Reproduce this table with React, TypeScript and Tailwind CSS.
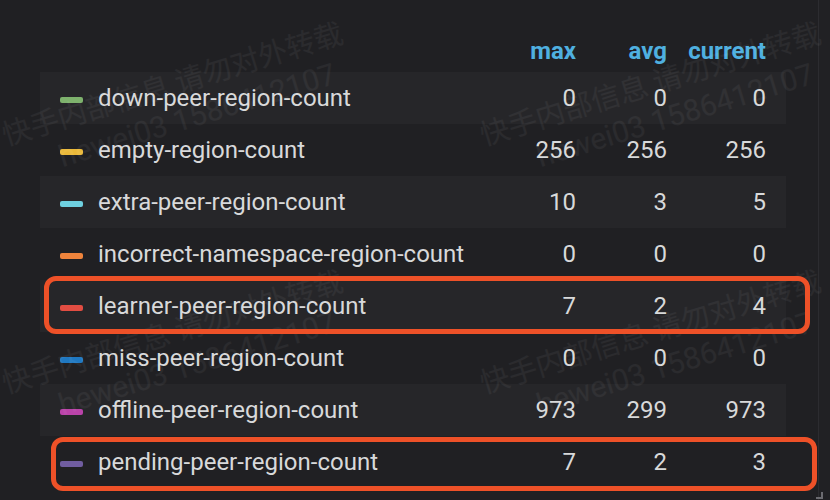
import React from 'react';

const rows = [
  { name: 'down-peer-region-count', color: '#7eb26d', max: '0', avg: '0', current: '0' },
  { name: 'empty-region-count', color: '#eab839', max: '256', avg: '256', current: '256' },
  { name: 'extra-peer-region-count', color: '#6ed0e0', max: '10', avg: '3', current: '5' },
  { name: 'incorrect-namespace-region-count', color: '#ef843c', max: '0', avg: '0', current: '0' },
  { name: 'learner-peer-region-count', color: '#e24d42', max: '7', avg: '2', current: '4' },
  { name: 'miss-peer-region-count', color: '#1f78c1', max: '0', avg: '0', current: '0' },
  { name: 'offline-peer-region-count', color: '#ba43a9', max: '973', avg: '299', current: '973' },
  { name: 'pending-peer-region-count', color: '#705da0', max: '7', avg: '2', current: '3' },
];

function Watermark({ left, top }: { left: number; top: number }) {
  return (
    <div
      className="absolute pointer-events-none origin-top-left -rotate-[17deg] whitespace-nowrap text-white/[0.05] leading-none"
      style={{ left, top }}
    >
      <div className="text-[29px] font-['Noto_Sans_CJK_SC',sans-serif]">快手内部信息 请勿对外转载</div>
      <div className="text-[30px] pl-[48px] mt-[10px]">hewei03 1586412107</div>
    </div>
  );
}

export default function App() {
  return (
    <div className="relative w-[830px] h-[500px] overflow-hidden bg-[#212124] font-['Roboto','Noto_Sans_CJK_SC',sans-serif]">
      <div className="w-[819px] h-full border-r border-[#2c2c30] bg-[#202023] pt-[30px] pl-[40px]">
        {/* Legend table */}
        <div className="w-[746px]">
          <div className="flex items-center h-[42px] pr-[20px] text-[24px] font-bold text-[#4fb0e0]">
            <div className="flex-1" />
            <div className="w-[80px] text-right">max</div>
            <div className="w-[91px] text-right">avg</div>
            <div className="w-[99px] text-right">current</div>
          </div>
          {rows.map((r, i) => (
            <div
              key={r.name}
              className={`flex items-center h-[52px] pr-[20px] text-[24px] text-[#d8d9da] ${i % 2 === 0 ? 'bg-[#262629]' : ''}`}
            >
              <div className="flex-1 flex items-center pl-[20px]">
                <span className="w-[23px] h-[6px] rounded-[2px] mt-[3px]" style={{ backgroundColor: r.color }} />
                <span className="ml-[15px]">{r.name}</span>
              </div>
              <div className="w-[80px] text-right">{r.max}</div>
              <div className="w-[91px] text-right">{r.avg}</div>
              <div className="w-[99px] text-right">{r.current}</div>
            </div>
          ))}
        </div>
      </div>

      {/* resize handle */}
      <svg className="absolute left-[815px] top-[491px]" width="9" height="9" viewBox="0 0 9 9">
        <path d="M7 1 V7 H1" fill="none" stroke="#6b6b70" strokeWidth="2" />
      </svg>

      {/* watermark */}
      <Watermark left={-2} top={120} />
      <Watermark left={476} top={120} />
      <Watermark left={-2} top={368} />
      <Watermark left={476} top={368} />

      {/* highlight boxes */}
      <div className="absolute left-[44px] top-[276px] w-[766px] h-[58px] border-[5px] border-[#ee5128] rounded-[12px] pointer-events-none" />
      <div className="absolute left-[51px] top-[437px] w-[766px] h-[54px] border-[5px] border-[#ee5128] rounded-[12px] pointer-events-none" />
    </div>
  );
}
